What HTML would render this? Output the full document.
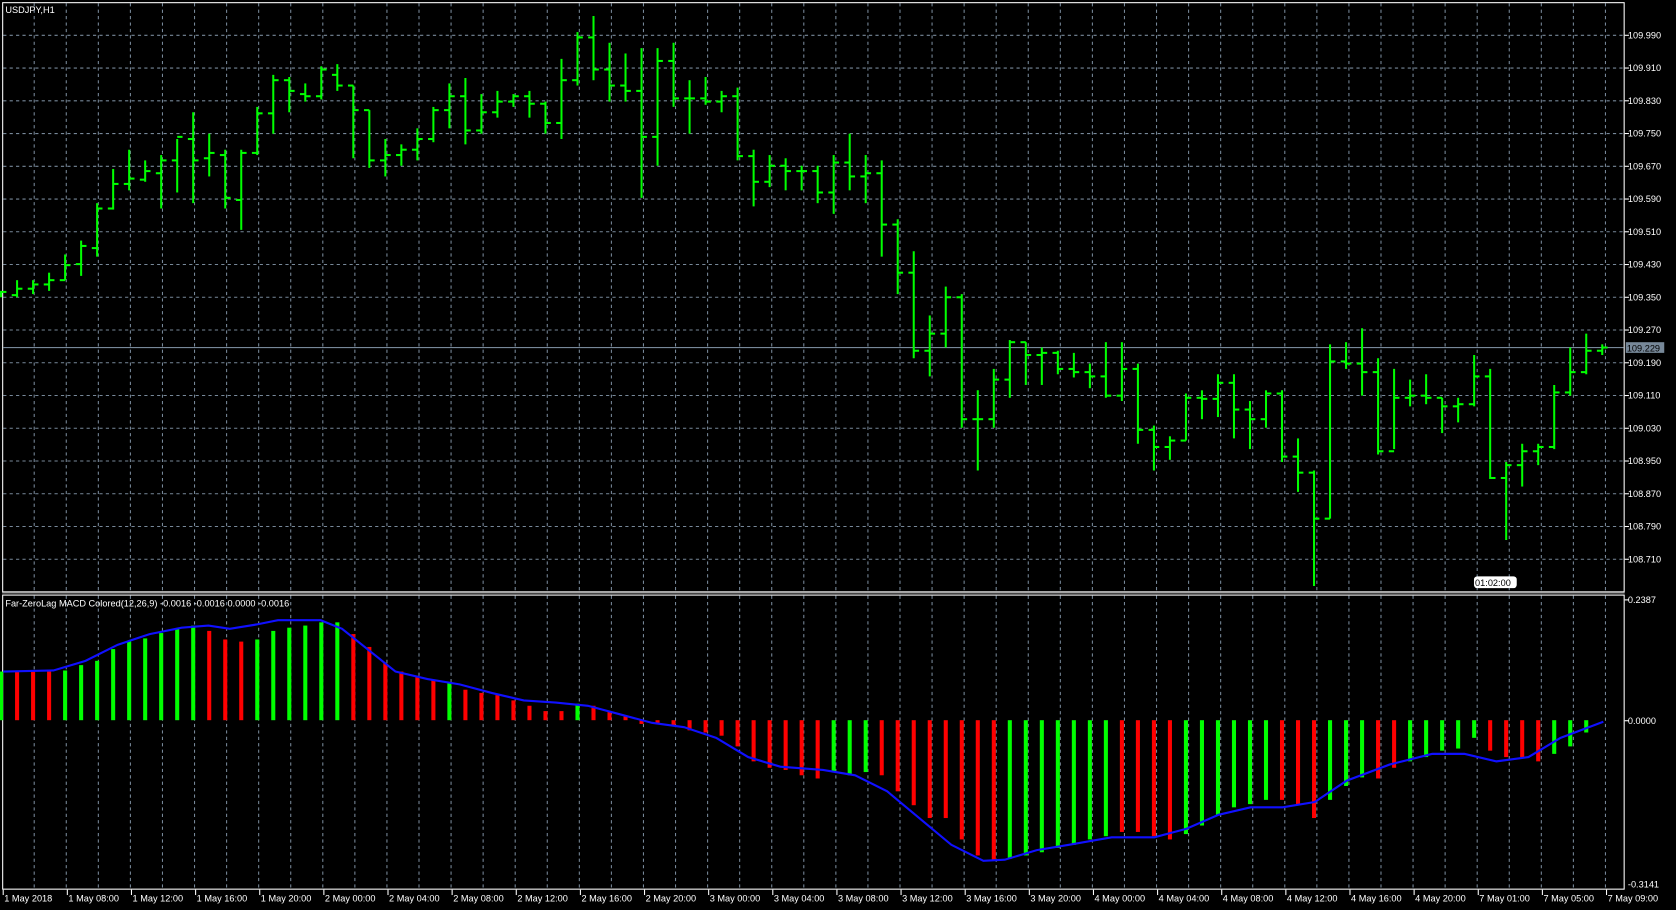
<!DOCTYPE html>
<html><head><meta charset="utf-8"><style>
html,body{margin:0;padding:0;background:#000;overflow:hidden}
svg{display:block}
text{font-family:"Liberation Sans",sans-serif;font-size:8.6px;fill:#fff}
</style></head><body>
<svg id="s" width="1676" height="910" viewBox="0 0 1568 851" preserveAspectRatio="none" xmlns="http://www.w3.org/2000/svg">
<rect width="1568" height="851" fill="#000"/>
<g id="g"></g>
</svg>
<script>
var o='';
var GC='#778899';
// vertical grid
for(var x=32;x<1520;x+=30){o+='<line x1="'+x+'" y1="3" x2="'+x+'" y2="553" stroke="'+GC+'" stroke-dasharray="3,3"/>';o+='<line x1="'+x+'" y1="557" x2="'+x+'" y2="831" stroke="'+GC+'" stroke-dasharray="3,3"/>';}
// horizontal grid + price labels
var prices=['109.990','109.910','109.830','109.750','109.670','109.590','109.510','109.430','109.350','109.270','109.190','109.110','109.030','108.950','108.870','108.790','108.710'];
for(var k=0;k<17;k++){var y=33+30.625*k;o+='<line x1="3" y1="'+y+'" x2="1519" y2="'+y+'" stroke="'+GC+'" stroke-dasharray="3,3"/>';o+='<line x1="1520" y1="'+y+'" x2="1524" y2="'+y+'" stroke="#fff"/>';o+='<text x="1523" y="'+(y+3)+'">'+prices[k]+'</text>';}
// frames
o+='<rect x="2.5" y="2.5" width="1517" height="551" fill="none" stroke="#fff"/>';
o+='<rect x="2.5" y="556.5" width="1517" height="275" fill="none" stroke="#fff"/>';
o+='<line x1="2" y1="554.5" x2="1520" y2="554.5" stroke="#888"/>';
// current price line
o+='<line x1="3" y1="325" x2="1519" y2="325" stroke="#778899"/>';
o+='<rect x="1521" y="320" width="36" height="10" fill="#778899"/><text x="1522" y="328.5" style="fill:#000">109.229</text>';
// bars
var B=[[272,278,275,273],[262,278,276,270],[262,275,270,266],[255,272,266,262],[238,262,262,248],[225,258,247,230],[190,240,232,195],[158,196,195,172],[140,178,172,167],[150,170,168,160],[145,195,162,150],[130,180,150,128],[105,190,130,150],[125,165,148,143],[140,195,145,185],[140,215,187,143],[100,145,143,106],[70,125,106,75],[72,105,75,85],[78,95,88,90],[62,93,90,65],[60,85,70,80],[80,148,80,103],[103,157,103,150],[130,165,150,145],[135,155,145,140],[120,150,140,130],[100,133,130,103],[78,120,103,90],[73,135,90,122],[88,125,122,105],[85,110,105,95],[88,100,95,90],[85,110,90,97],[95,125,97,115],[55,130,115,75],[30,80,75,35],[15,75,35,65],[40,95,65,80],[50,95,80,85],[45,185,85,128],[45,155,128,57],[40,100,57,92],[75,125,92,92],[72,98,92,95],[85,105,95,90],[82,150,90,146],[140,193,146,170],[145,175,170,155],[148,178,155,160],[155,178,160,160],[155,190,160,180],[145,200,180,152],[125,178,152,165],[145,190,165,162],[150,240,162,210],[205,275,210,255],[235,335,255,328],[295,352,328,312],[268,325,312,278],[275,400,278,392],[365,440,392,392],[345,400,392,355],[318,372,355,320],[320,360,320,332],[325,360,332,330],[328,350,330,345],[330,353,345,348],[340,363,348,352],[320,372,352,370],[320,375,370,345],[340,415,345,402],[398,440,402,418],[408,430,418,412],[368,412,412,372],[365,392,372,373],[350,390,373,358],[350,410,358,383],[375,420,383,392],[365,400,392,368],[365,432,368,427],[410,460,427,442],[440,548,442,485],[322,485,485,338],[320,345,338,340],[307,370,340,348],[335,425,348,422],[345,420,422,372],[355,380,372,370],[350,378,370,372],[372,405,372,380],[372,395,380,378],[332,380,378,352],[345,448,352,447],[432,505,447,435],[415,455,435,422],[415,435,422,418],[360,420,418,367],[325,370,367,348],[312,350,348,328],[322,332,328,325]];
var G='#00ff00';
for(var i=0;i<B.length;i++){var x=1+14.98*i,b=B[i];
o+='<line x1="'+x+'" y1="'+b[0]+'" x2="'+x+'" y2="'+b[1]+'" stroke="'+G+'" stroke-width="1.9"/>';
o+='<line x1="'+(x-5)+'" y1="'+b[2]+'" x2="'+x+'" y2="'+b[2]+'" stroke="'+G+'" stroke-width="1.9"/>';
o+='<line x1="'+x+'" y1="'+b[3]+'" x2="'+(x+5)+'" y2="'+b[3]+'" stroke="'+G+'" stroke-width="1.9"/>';}
// MACD
var M=[[628,1],[628,0],[627,0],[628,0],[627,1],[622,1],[618,1],[607,1],[600,1],[597,1],[592,1],[588,1],[585,1],[590,0],[598,0],[600,0],[598,1],[590,1],[587,1],[585,1],[582,1],[582,1],[593,0],[605,0],[620,0],[628,0],[632,0],[636,0],[638,1],[645,0],[648,0],[650,0],[655,0],[660,0],[665,0],[665,0],[658,1],[660,0],[665,0],[670,0],[677,0],[676,0],[678,0],[683,0],[685,0],[688,0],[698,0],[712,0],[718,0],[720,0],[725,0],[728,0],[722,1],[725,1],[722,1],[725,0],[740,0],[753,0],[765,0],[765,0],[785,0],[800,0],[805,0],[803,1],[800,1],[797,1],[793,1],[790,1],[785,1],[782,1],[778,0],[778,0],[782,0],[785,0],[780,1],[772,1],[762,1],[755,1],[752,1],[748,1],[748,0],[752,0],[765,0],[748,1],[735,1],[727,1],[728,0],[718,0],[712,1],[708,1],[702,1],[700,1],[690,1],[702,0],[708,0],[708,0],[712,0],[705,1],[698,1],[685,1]];
var Z=673.5;
for(var i=0;i<M.length;i++){var x=1+14.98*i,y=M[i][0],c=M[i][1]?'#00ff00':'#ff0000';
var t=Math.min(y,Z),h=Math.abs(y-Z);o+='<rect x="'+(x-1.9)+'" y="'+t+'" width="3.8" height="'+h+'" fill="'+c+'"/>';}
var P=[[3,628],[50,627],[80,618],[110,603],[140,593],[170,587],[195,585],[215,588],[240,584],[260,580],[300,580],[320,588],[345,608],[370,628],[400,635],[430,640],[460,648],[490,655],[520,657],[550,660],[580,668],[610,676],[640,680],[670,690],[700,708],[730,717],[770,720],[800,725],[830,740],[860,765],[890,790],[920,805],[940,804],[970,795],[1000,790],[1040,783],[1080,783],[1110,775],[1140,762],[1170,755],[1200,755],[1230,750],[1260,730],[1300,715],[1340,705],[1370,705],[1400,712],[1430,708],[1460,690],[1500,675]];
o+='<polyline fill="none" stroke="#1010ff" stroke-width="2" points="'+P.map(function(p){return p.join(',')}).join(' ')+'"/>';
// macd axis
o+='<text x="1523" y="564">0.2387</text><line x1="1520" y1="561" x2="1524" y2="561" stroke="#fff"/>';
o+='<text x="1523" y="677">0.0000</text><line x1="1520" y1="674" x2="1524" y2="674" stroke="#fff"/>';
o+='<text x="1523" y="830">-0.3141</text>';
// time labels
var T=['1 May 2018','1 May 08:00','1 May 12:00','1 May 16:00','1 May 20:00','2 May 00:00','2 May 04:00','2 May 08:00','2 May 12:00','2 May 16:00','2 May 20:00','3 May 00:00','3 May 04:00','3 May 08:00','3 May 12:00','3 May 16:00','3 May 20:00','4 May 00:00','4 May 04:00','4 May 08:00','4 May 12:00','4 May 16:00','4 May 20:00','7 May 01:00','7 May 05:00','7 May 09:00'];
for(var k=0;k<T.length;k++){var x=3+60*k;o+='<line x1="'+x+'" y1="832" x2="'+x+'" y2="837" stroke="#fff"/><text x="'+(x+1)+'" y="843">'+T[k]+'</text>';}
o+='<text x="5" y="12">USDJPY,H1</text>';
o+='<text x="5" y="567">Far-ZeroLag MACD Colored(12,26,9) -0.0016 -0.0016 0.0000 -0.0016</text>';
o+='<rect x="1379" y="539" width="40" height="11" rx="3" fill="#fff"/><text x="1380" y="548" style="fill:#000">01:02:00</text>';
document.getElementById('g').innerHTML=o;
</script>
</body></html>
